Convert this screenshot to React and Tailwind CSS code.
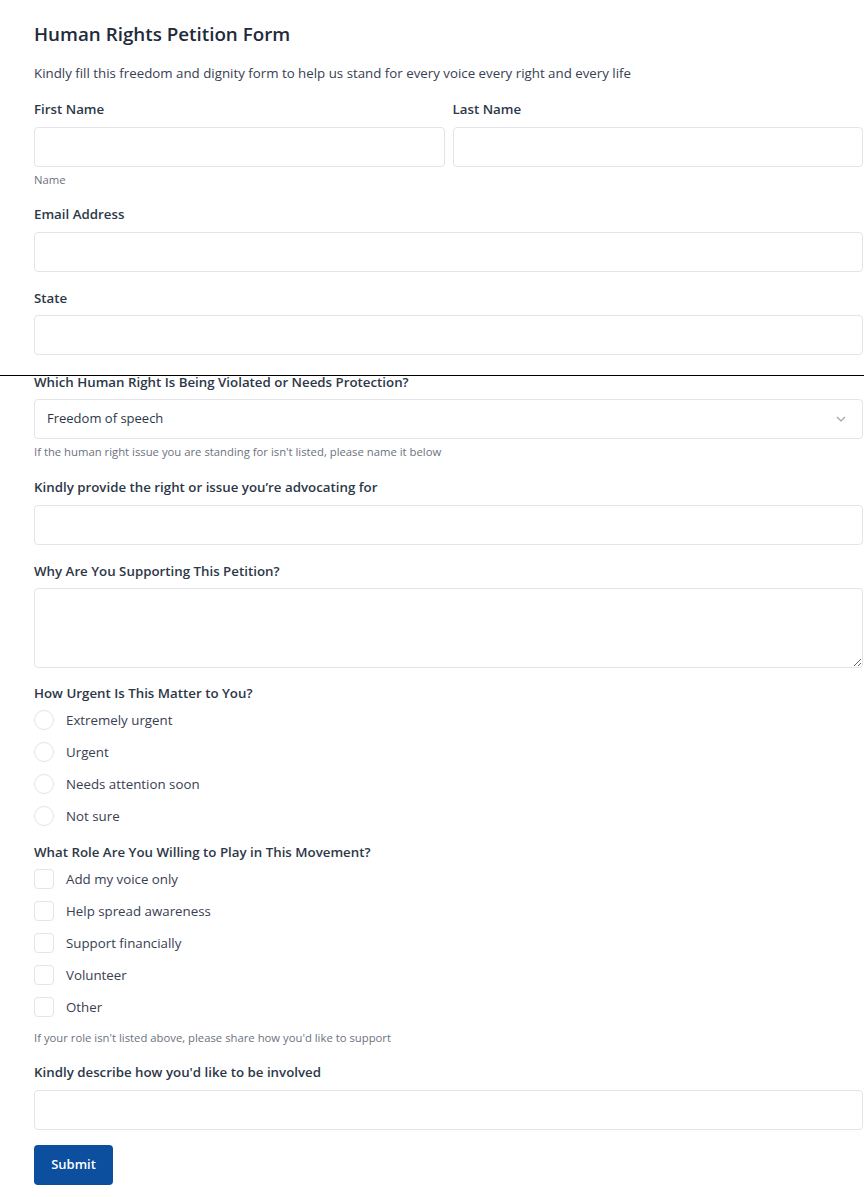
import React from "react";

const font = { fontFamily: '"Open Sans", "Noto Sans", sans-serif' };

function Label({ children, className = "" }) {
  return (
    <div className={`text-[13.3px] font-semibold text-[#2d3748] leading-[18px] ${className}`}>
      {children}
    </div>
  );
}

function TextInput({ className = "" }) {
  return (
    <input
      type="text"
      className={`block h-10 w-full rounded border border-[#e2e4e8] bg-white px-3 text-[13px] outline-none ${className}`}
    />
  );
}

function Help({ children, className = "" }) {
  return <div className={`text-[11.3px] leading-[15px] text-[#6b7280] ${className}`}>{children}</div>;
}

const urgency = ["Extremely urgent", "Urgent", "Needs attention soon", "Not sure"];
const roles = ["Add my voice only", "Help spread awareness", "Support financially", "Volunteer", "Other"];

export default function App() {
  return (
    <div className="min-h-[1197px] bg-white pl-[34px] pr-px text-[#2d3748]" style={font}>
      <h1 className="pt-[22px] text-[18.8px] font-semibold leading-6 text-[#1f2a3a]">
        Human Rights Petition Form
      </h1>
      <p className="mt-[18px] text-[13.3px] leading-[18px] text-[#374151]">
        Kindly fill this freedom and dignity form to help us stand for every voice every right and every life
      </p>

      <div className="mt-[18px] grid grid-cols-2 gap-2">
        <div>
          <Label>First Name</Label>
          <TextInput className="mt-[9px]" />
        </div>
        <div>
          <Label>Last Name</Label>
          <TextInput className="mt-[9px]" />
        </div>
      </div>
      <Help className="mt-[5px]">Name</Help>

      <Label className="mt-[18px]">Email Address</Label>
      <TextInput className="mt-[9px]" />

      <Label className="mt-[17px]">State</Label>
      <TextInput className="mt-[8px]" />

      <div className="-ml-[34px] -mr-px mt-[20px] h-px bg-black" />

      <Label className="-mt-[3px]">Which Human Right Is Being Violated or Needs Protection?</Label>
      <div className="relative mt-[8px]">
        <select className="block h-10 w-full appearance-none rounded border border-[#e2e4e8] bg-white px-3 text-[13px] text-[#2d3748] outline-none">
          <option>Freedom of speech</option>
        </select>
        <svg
          className="pointer-events-none absolute right-[17px] top-1/2 -translate-y-1/2"
          width="10"
          height="6"
          viewBox="0 0 10 6"
          fill="none"
        >
          <path d="M1 1l4 4 4-4" stroke="#9ca3af" strokeWidth="1.2" />
        </svg>
      </div>
      <Help className="mt-[5px]">If the human right issue you are standing for isn't listed, please name it below</Help>

      <Label className="mt-[19px]">Kindly provide the right or issue you’re advocating for</Label>
      <TextInput className="mt-[9px]" />

      <Label className="mt-[17px]">Why Are You Supporting This Petition?</Label>
      <textarea className="mt-[8px] block h-20 w-full rounded border border-[#e2e4e8] bg-white px-3 py-2 text-[13px] outline-none" />

      <Label className="mt-[16px]">How Urgent Is This Matter to You?</Label>
      <div className="mt-[8px] flex flex-col gap-3">
        {urgency.map((u) => (
          <label key={u} className="flex items-center gap-3">
            <span className="h-5 w-5 rounded-full border border-[#e2e4e8] bg-white" />
            <span className="text-[13.3px] leading-5 text-[#374151]">{u}</span>
          </label>
        ))}
      </div>

      <Label className="mt-[17px]">What Role Are You Willing to Play in This Movement?</Label>
      <div className="mt-[8px] flex flex-col gap-3">
        {roles.map((r) => (
          <label key={r} className="flex items-center gap-3">
            <span className="h-5 w-5 rounded border border-[#e2e4e8] bg-white" />
            <span className="text-[13.3px] leading-5 text-[#374151]">{r}</span>
          </label>
        ))}
      </div>
      <Help className="mt-[13px]">If your role isn't listed above, please share how you'd like to support</Help>

      <Label className="mt-[18px]">Kindly describe how you'd like to be involved</Label>
      <TextInput className="mt-[9px]" />

      <button className="mt-[15px] h-10 w-[79px] rounded bg-[#0b4f9e] text-[13px] font-semibold text-white">
        Submit
      </button>
    </div>
  );
}
